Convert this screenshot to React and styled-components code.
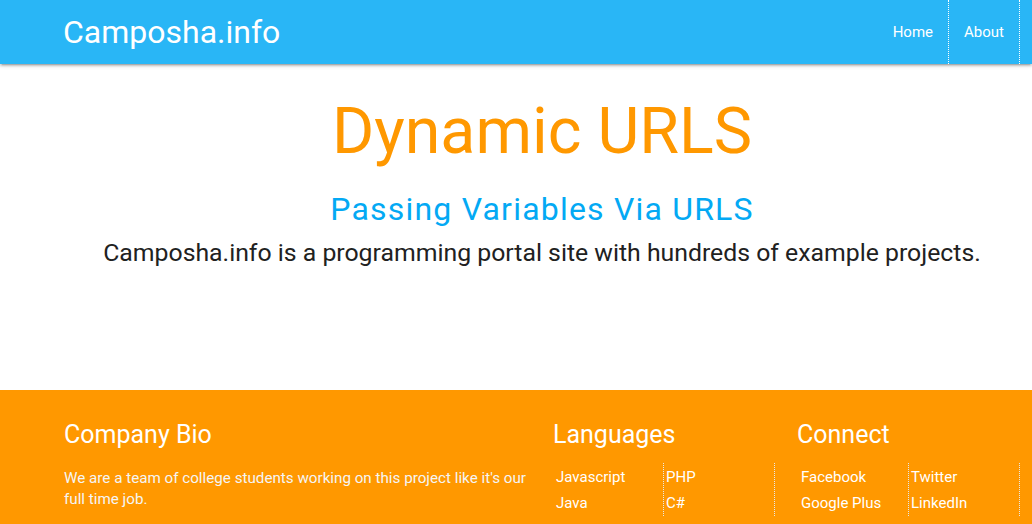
import React from 'react';
import styled, { createGlobalStyle } from 'styled-components';

const GlobalStyle = createGlobalStyle`
  html, body {
    margin: 0;
    padding: 0;
    background: #fff;
    font-family: Roboto, "Liberation Sans", sans-serif;
  }
  ul {
    margin: 0;
    padding: 0;
    list-style: none;
  }
`;

const languages = [
  ['Javascript', 'Java'],
  ['PHP', 'C#'],
];

const connect = [
  ['Facebook', 'Google Plus'],
  ['Twitter', 'LinkedIn'],
];

const App = () => (
  <>
    <GlobalStyle />
    <Nav>
      <NavInner>
        <Brand href="#">Camposha.info</Brand>
        <NavList>
          <NavItem><NavLink href="#">Home</NavLink></NavItem>
          <NavItem><NavLink href="#">About</NavLink></NavItem>
        </NavList>
      </NavInner>
    </Nav>

    <Main>
      <Title>Dynamic URLS</Title>
      <Subtitle>Passing Variables Via URLS</Subtitle>
      <Lead>Camposha.info is a programming portal site with hundreds of example projects.</Lead>
    </Main>

    <Footer>
      <FooterGrid>
        <Bio>
          <FooterHeading>Company Bio</FooterHeading>
          <BioText>
            We are a team of college students working on this project like it's our full time job.
          </BioText>
        </Bio>
        <div>
          <FooterHeading $shift={1}>Languages</FooterHeading>
          <LinkColumns>
            {languages.map((col, i) => (
              <LinkList key={i}>
                {col.map(item => (
                  <li key={item}><FooterLink href="#">{item}</FooterLink></li>
                ))}
              </LinkList>
            ))}
          </LinkColumns>
        </div>
        <div>
          <FooterHeading $shift={2}>Connect</FooterHeading>
          <LinkColumns>
            {connect.map((col, i) => (
              <LinkList key={i}>
                {col.map(item => (
                  <li key={item}><FooterLink href="#">{item}</FooterLink></li>
                ))}
              </LinkList>
            ))}
          </LinkColumns>
        </div>
      </FooterGrid>
    </Footer>
  </>
);

const Nav = styled.nav`
  height: 64px;
  background: #29b6f6;
  box-shadow: 0 2px 2px 0 rgba(0, 0, 0, 0.14), 0 3px 1px -2px rgba(0, 0, 0, 0.12),
    0 1px 5px 0 rgba(0, 0, 0, 0.2);
  position: relative;
  z-index: 1;
`;

const NavInner = styled.div`
  display: flex;
  justify-content: space-between;
  align-items: stretch;
  height: 100%;
  padding: 0 12px 0 63px;
`;

const Brand = styled.a`
  color: #fff;
  text-decoration: none;
  font-size: 32px;
  line-height: 64px;
`;

const NavList = styled.ul`
  display: flex;
`;

const NavItem = styled.li`
  border-right: 1px dotted #fff;
`;

const NavLink = styled.a`
  display: block;
  padding: 0 15px;
  color: #fff;
  text-decoration: none;
  font-size: 15px;
  line-height: 64px;
`;

const Main = styled.main`
  height: 326px;
  padding: 1px 12px 0 64px;
  box-sizing: border-box;
  text-align: center;
  overflow: hidden;
`;

const Title = styled.h1`
  margin: 29.5px 0 0;
  color: #ff9800;
  font-size: 64.5px;
  font-weight: 400;
  line-height: 73px;
`;

const Subtitle = styled.h4`
  margin: 23px 0 0;
  color: #03a9f4;
  font-size: 32px;
  font-weight: 400;
  letter-spacing: 1.2px;
  line-height: 36px;
`;

const Lead = styled.p`
  margin: 10px 0 0;
  color: #212121;
  font-size: 24.8px;
  line-height: 32px;
`;

const Footer = styled.footer`
  background: #ff9800;
  height: 134px;
  padding-top: 1px;
  box-sizing: border-box;
  overflow: hidden;
`;

const FooterGrid = styled.div`
  display: grid;
  grid-template-columns: 490px 245px 222px;
  padding: 0 12px 0 64px;
`;

const Bio = styled.div`
  padding-right: 26px;
`;

const FooterHeading = styled.h5`
  margin: 28px 0 0 ${p => -(p.$shift || 0)}px;
  color: #fff;
  font-size: 25px;
  font-weight: 400;
  line-height: 32px;
`;

const BioText = styled.p`
  margin: 17px 0 0;
  color: #f5f5f5;
  font-size: 15.2px;
  line-height: 21px;
`;

const LinkColumns = styled.div`
  display: flex;
  margin-top: 12px;
`;

const LinkList = styled.ul`
  width: 111px;
  padding: 1px 0 0 2px;
  border-right: 1px dotted #e8e8e8;
  box-sizing: border-box;
  &:first-child {
    width: 110px;
  }
`;

const FooterLink = styled.a`
  display: block;
  color: #fff;
  text-decoration: none;
  font-size: 15px;
  line-height: 26px;
`;

export default App;
